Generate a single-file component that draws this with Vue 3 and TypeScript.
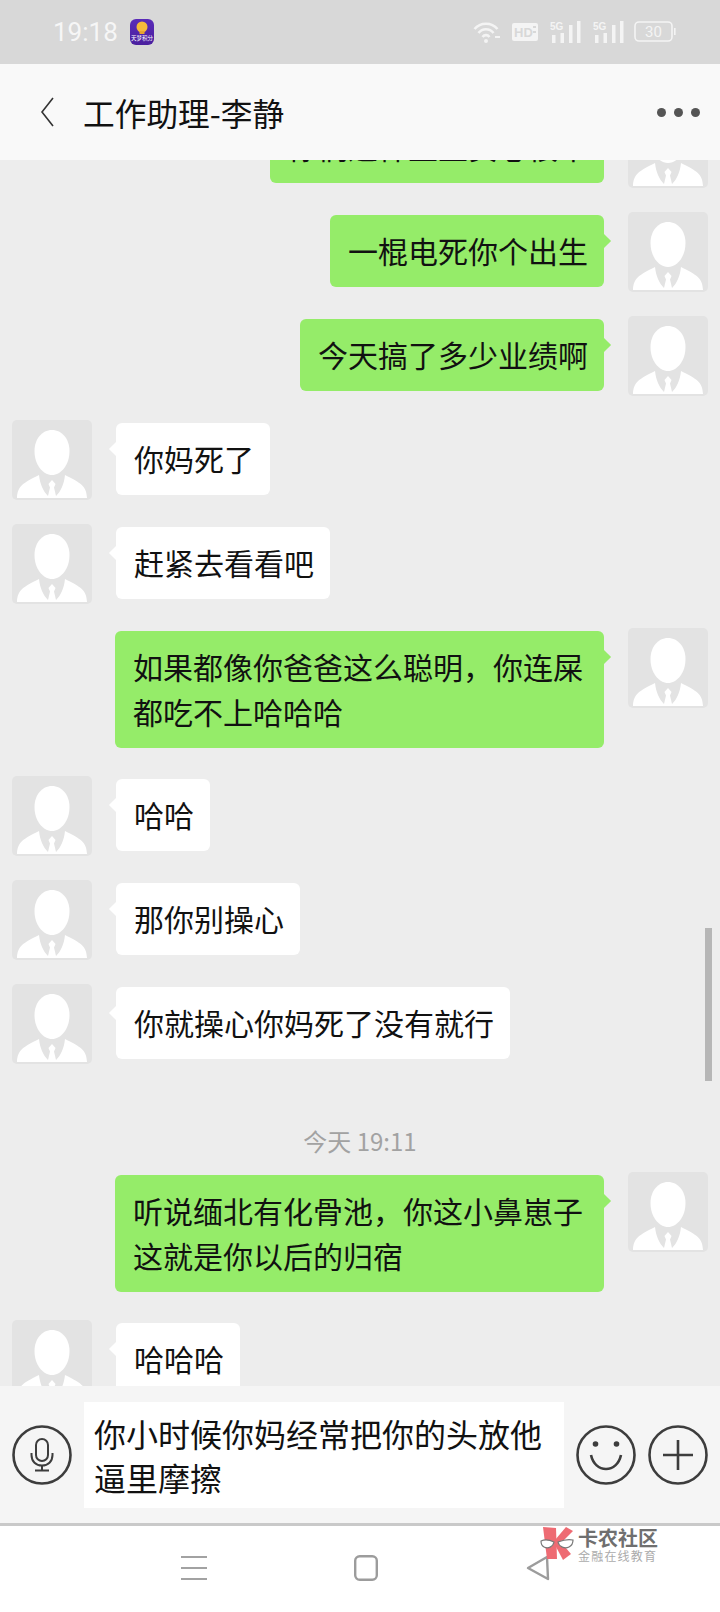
<script setup lang="ts">
type Msg = { kind: "left" | "right" | "time"; text: string }

const messages: Msg[] = [
  { kind: "right", text: "你们这样里里贵心很牛" },
  { kind: "right", text: "一棍电死你个出生" },
  { kind: "right", text: "今天搞了多少业绩啊" },
  { kind: "left", text: "你妈死了" },
  { kind: "left", text: "赶紧去看看吧" },
  { kind: "right", text: "如果都像你爸爸这么聪明，你连屎都吃不上哈哈哈" },
  { kind: "left", text: "哈哈" },
  { kind: "left", text: "那你别操心" },
  { kind: "left", text: "你就操心你妈死了没有就行" },
  { kind: "time", text: "今天 19:11" },
  { kind: "right", text: "听说缅北有化骨池，你这小鼻崽子这就是你以后的归宿" },
  { kind: "left", text: "哈哈哈" },
]
</script>

<template>
  <div class="phone">
    <div class="status">
      <span class="clock">19:18</span>
      <svg class="app-icon" width="24" height="26" viewBox="0 0 24 26">
        <defs>
          <linearGradient id="appbg" x1="0" y1="0" x2="0" y2="1">
            <stop offset="0" stop-color="#5a2bb8" />
            <stop offset="1" stop-color="#4a1f9e" />
          </linearGradient>
        </defs>
        <rect width="24" height="26" rx="6" fill="url(#appbg)" />
        <circle cx="12" cy="8" r="5.5" fill="#f5b93a" />
        <rect x="9.5" y="12" width="5" height="3" fill="#e8a52e" />
        <text x="12" y="21" text-anchor="middle" class="app-label">天梦积分</text>
      </svg>
      <div class="status-right">
        <svg width="27" height="23" viewBox="0 0 27 23" fill="none" stroke="#f4f4f4" stroke-width="2.6">
          <path d="M1.5 8 C7.5 1 18.5 1 24.5 8" />
          <path d="M5.5 12 C9.5 7 16.5 7 20.5 12" />
          <path d="M9.5 16 C11.5 13.5 14.5 13.5 16.5 16" />
          <circle cx="13" cy="20" r="2" fill="#f4f4f4" stroke="none" />
          <rect x="22" y="15" width="5" height="2" fill="#f4f4f4" stroke="none" />
        </svg>
        <svg width="26" height="18" viewBox="0 0 26 18">
          <rect width="26" height="18" rx="2" fill="#f4f4f4" />
          <text x="2" y="14" class="hd-label">HD</text>
          <rect x="21" y="3" width="3" height="2" fill="#d8d8d8" />
          <rect x="21" y="8" width="3" height="2" fill="#d8d8d8" />
        </svg>
        <svg v-for="n in 2" :key="n" width="31" height="24" viewBox="0 0 31 24" fill="#f4f4f4">
          <text x="0" y="10" class="sig-label">5G</text>
          <rect x="2" y="15" width="3.5" height="8" />
          <rect x="10.5" y="13" width="3.5" height="10" />
          <rect x="19" y="5" width="3.5" height="18" />
          <rect x="27" y="1" width="3.5" height="22" />
        </svg>
        <svg class="batt" width="42" height="22" viewBox="0 0 42 22">
          <rect x="1" y="1" width="37" height="19" rx="4" fill="none" stroke="#f4f4f4" stroke-width="1.6" />
          <rect x="40" y="7" width="1.6" height="7" fill="#f4f4f4" />
          <text x="19.5" y="16" text-anchor="middle" class="batt-label">30</text>
        </svg>
      </div>
    </div>

    <div class="header">
      <svg class="back" width="14" height="30" viewBox="0 0 14 30" fill="none" stroke="#333" stroke-width="1.6">
        <path d="M13 1 L2 15 L13 29" />
      </svg>
      <span class="title">工作助理-李静</span>
      <div class="dots"><i></i><i></i><i></i></div>
    </div>

    <div class="chat">
      <div class="scrollbar"></div>
      <div class="list">
        <template v-for="(m, i) in messages" :key="i">
          <div v-if="m.kind === 'time'" class="time">{{ m.text }}</div>
          <div v-else class="row" :class="m.kind">
            <svg class="avatar" width="80" height="80" viewBox="0 0 80 80">
              <rect width="80" height="80" rx="5" fill="#e3e3e3" />
              <path d="M40 10 C50 10 57.500 19 57.500 31 C57.500 45 49 55 40 55 C31 55 22.500 45 22.500 31 C22.500 19 30 10 40 10 Z" fill="#fff" />
              <path d="M5 78 C5.500 66 11 63 27 55 C28 64 31 71 36 76 L36 78 Z" fill="#fff" />
              <path d="M75 78 C74.500 66 69 63 53 55 C52 64 49 71 44 76 L44 78 Z" fill="#fff" />
              <path d="M40 60 L36.500 64 L38 67.500 L36 76 L36 78 L44 78 L44 76 L42 67.500 L43.500 64 Z" fill="#fff" />
            </svg>
            <div class="bubble">{{ m.text }}</div>
          </div>
        </template>
      </div>
    </div>

    <div class="input-bar">
      <svg class="round" width="60" height="60" viewBox="0 0 60 60" fill="none" stroke="#3d3d3d" stroke-width="2.600">
        <circle cx="30" cy="30" r="28.500" />
        <rect x="24" y="14" width="12" height="22" rx="6" stroke-width="2" />
        <path d="M19.500 28 V30 C19.500 36.500 24 40.500 30 40.500 C36 40.500 40.500 36.500 40.500 30 V28" stroke-width="2" />
        <path d="M30 40.500 V45 M23 45.500 H37" stroke-width="2" />
      </svg>
      <div class="input">你小时候你妈经常把你的头放他逼里摩擦</div>
      <svg class="round" width="60" height="60" viewBox="0 0 60 60" fill="none" stroke="#3d3d3d" stroke-width="2.600">
        <circle cx="30" cy="30" r="28.500" />
        <circle cx="19.500" cy="19" r="2.800" fill="#3d3d3d" stroke="none" />
        <circle cx="40.500" cy="19" r="2.800" fill="#3d3d3d" stroke="none" />
        <path d="M15 30 C17 39 23 44 30 44 C37 44 43 39 45 30" />
      </svg>
      <svg class="round" width="60" height="60" viewBox="0 0 60 60" fill="none" stroke="#3d3d3d" stroke-width="2.600">
        <circle cx="30" cy="30" r="28.500" />
        <path d="M30 15 V45 M15 30 H45" />
      </svg>
    </div>

    <div class="nav">
      <div class="nav-cell">
        <svg width="26" height="26" viewBox="0 0 26 26" stroke="#a2a2a2" stroke-width="2.200">
          <path d="M0 2 H26 M0 13 H26 M0 24 H26" />
        </svg>
      </div>
      <div class="nav-cell">
        <svg width="24" height="26" viewBox="0 0 24 26" fill="none" stroke="#9c9c9c" stroke-width="2.400">
          <rect x="1.200" y="1.200" width="21.600" height="23.600" rx="4.500" />
        </svg>
      </div>
      <div class="nav-cell">
        <svg width="24" height="26" viewBox="0 0 24 26" fill="none" stroke="#9c9c9c" stroke-width="2.400" stroke-linejoin="round">
          <path d="M2 13 L21 2 L22 24 Z" />
        </svg>
      </div>
      <div class="mark">
        <svg width="36" height="36" viewBox="0 0 36 36">
          <path d="M4 1 L17 2 L18 33 L8 33 Z" fill="#ee6b73" />
          <path d="M16 14 L27 1 L34 5 L19 20 Z" fill="#ee6b73" />
          <path d="M15 17 L21 15 L32 28 L24 34 Z" fill="#ee6b73" />
          <path d="M2 15 C6 13 11 14 15 16 C14 21 9 23 5 21 C3 20 2 17 2 15 Z" fill="#fff" stroke="#777" stroke-width="1.200" />
          <path d="M34 14 C30 13 24 14 19 16 C20 21 26 23 30 21 C32 20 34 17 34 14 Z" fill="#fff" stroke="#777" stroke-width="1.200" />
        </svg>
        <div class="mark-text">
          <span class="mark-name">卡农社区</span>
          <span class="mark-sub">金融在线教育</span>
        </div>
      </div>
    </div>
  </div>
</template>

<style scoped>
.phone {
  width: 720px;
  height: 1612px;
  display: flex;
  flex-direction: column;
  overflow: hidden;
  font-family: "Noto Sans CJK SC", "Noto Sans", sans-serif;
  color: #111;
  background: #ededed;
}

.status {
  flex: none;
  height: 64px;
  background: #d8d8d8;
  display: flex;
  align-items: center;
  padding: 0 44px 0 53px;
  box-sizing: border-box;
}
.clock {
  font-family: Roboto, "Noto Sans", sans-serif;
  font-size: 26px;
  color: #f6f6f6;
  width: 77px;
}
.app-icon {
  flex: none;
}
.app-label {
  font-size: 5.500px;
  fill: #fff;
}
.status-right {
  margin-left: auto;
  display: flex;
  align-items: center;
  gap: 12px;
}
.hd-label {
  font-family: "Liberation Sans", sans-serif;
  font-size: 13px;
  font-weight: 700;
  fill: #d8d8d8;
}
.sig-label {
  font-family: "Liberation Sans", sans-serif;
  font-size: 10px;
  font-weight: 700;
}
.batt {
  margin-left: -2px;
}
.batt-label {
  font-family: Roboto, sans-serif;
  font-size: 15px;
  fill: #f4f4f4;
}

.header {
  flex: none;
  height: 96px;
  background: #f9f9f9;
  display: flex;
  align-items: center;
  padding: 0 20px 0 40px;
  box-sizing: border-box;
  position: relative;
  z-index: 1;
}
.title {
  margin-left: 29px;
  font-size: 31.700px;
  line-height: 44px;
  color: #111;
}
.dots {
  margin-left: auto;
  display: flex;
  gap: 8px;
}
.dots i {
  width: 9px;
  height: 9px;
  border-radius: 50%;
  background: #555;
}

.chat {
  flex: 1;
  min-height: 0;
  overflow: hidden;
  position: relative;
}
.scrollbar {
  position: absolute;
  left: 705px;
  top: 768px;
  width: 7px;
  height: 153px;
  background: #b6b6b6;
}
.list {
  margin-top: -52px;
  display: flex;
  flex-direction: column;
}
.row {
  display: flex;
  align-items: flex-start;
  gap: 24px;
  padding: 0 12px;
  margin-bottom: 24px;
}
.row.right {
  flex-direction: row-reverse;
}
.avatar {
  flex: none;
}
.bubble {
  position: relative;
  margin: 3px 0 4px;
  max-width: 489px;
  box-sizing: border-box;
  padding: 12.500px 16px 14.500px 18px;
  font-size: 30px;
  line-height: 45px;
  border-radius: 6px;
  background: #fff;
}
.row.right .bubble {
  background: #95ec69;
}
.bubble::before {
  content: "";
  position: absolute;
  top: 21px;
  width: 10px;
  height: 10px;
  background: inherit;
  transform: rotate(45deg);
}
.row.left .bubble::before {
  left: -5px;
}
.row.right .bubble::before {
  right: -5px;
}
.time {
  margin: 35px 0 13px;
  height: 36px;
  line-height: 36px;
  text-align: center;
  font-size: 24px;
  color: #a2a2a2;
}

.input-bar {
  flex: none;
  height: 137px;
  background: #f5f5f5;
  border-bottom: 3px solid #c9c9c9;
  display: flex;
  align-items: center;
  gap: 12px;
  padding: 0 12px;
  box-sizing: content-box;
  position: relative;
  z-index: 1;
}
.round {
  flex: none;
}
.input {
  flex: 1;
  height: 106px;
  box-sizing: border-box;
  background: #fff;
  padding: 9px 10px;
  font-size: 32px;
  line-height: 44px;
  color: #111;
}

.nav {
  flex: none;
  height: 86px;
  background: #fff;
  position: relative;
  display: grid;
  grid-template-columns: repeat(3, 172px);
  padding: 29px 0 0 108px;
  box-sizing: border-box;
  align-content: start;
}
.nav-cell {
  display: flex;
  justify-content: center;
}
.mark {
  position: absolute;
  left: 539px;
  top: 0;
  display: flex;
  align-items: flex-start;
  gap: 3px;
}
.mark-text {
  display: flex;
  flex-direction: column;
  padding-top: 2px;
}
.mark-name {
  font-size: 20px;
  line-height: 20px;
  font-weight: 700;
  color: #6f6f6f;
}
.mark-sub {
  margin-top: 2px;
  font-size: 12px;
  line-height: 12px;
  letter-spacing: 1.200px;
  color: #ababab;
}
</style>
